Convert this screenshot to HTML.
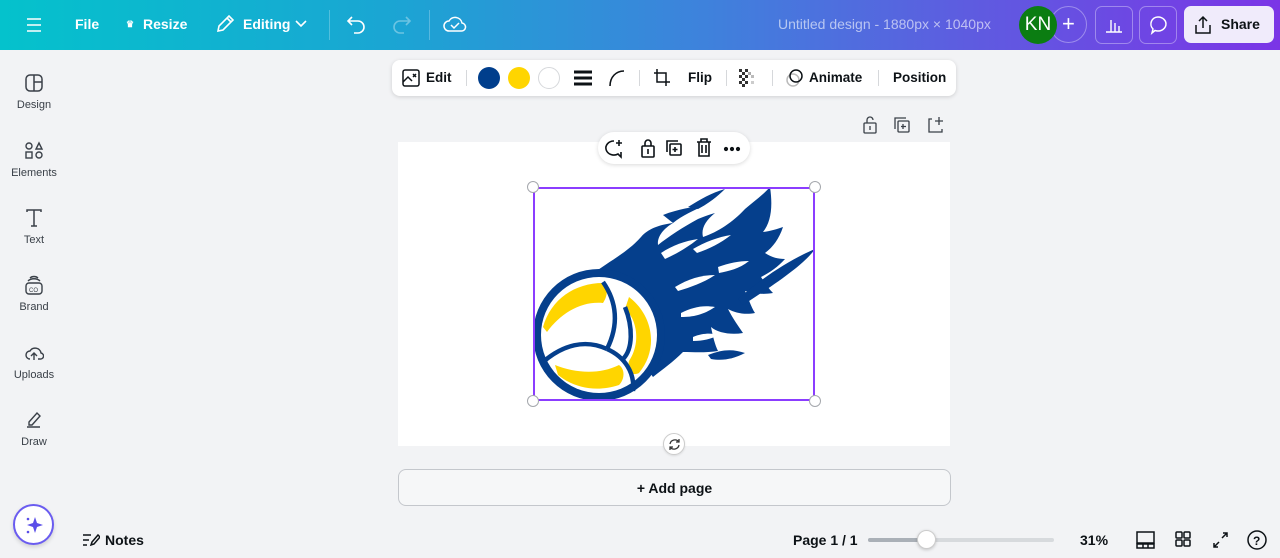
<!DOCTYPE html>
<html><head><meta charset="utf-8"><style>
*{box-sizing:border-box;margin:0;padding:0}
body{width:1280px;height:558px;overflow:hidden;background:#f2f3f5;font-family:"Liberation Sans",sans-serif;position:relative;color:#0d1216}
.hdr{position:absolute;left:0;top:0;width:1280px;height:50px;background:linear-gradient(90deg,#04c2cc 0%,#1aa6d3 30%,#3e82dc 55%,#5d5de0 75%,#7b35e6 100%);color:#fff}
.hdr .t{position:absolute;top:16px;font-size:14px;font-weight:bold}
.sep{position:absolute;top:10px;width:1px;height:30px;background:rgba(255,255,255,.25)}
.side{position:absolute;left:0;top:51px;width:68px;height:507px}
.si{position:absolute;left:0;width:68px;text-align:center;font-size:11px;color:#3a4048}
.si svg{display:block;margin:0 auto 6px}
.tb{position:absolute;left:392px;top:60px;width:564px;height:36px;background:#fff;border-radius:8px;box-shadow:0 1px 4px rgba(0,0,0,.15);font-size:13.5px;font-weight:bold}
.tb .x{position:absolute;top:10px}
.vs{position:absolute;top:10px;width:1px;height:16px;background:#d6d8db}
.dot{position:absolute;top:7px;width:22px;height:22px;border-radius:50%}
.page{position:absolute;left:398px;top:142px;width:552px;height:304px;background:#fff}
.fl{position:absolute;left:598px;top:132px;width:152px;height:32px;background:#fff;border-radius:16px;box-shadow:0 1px 4px rgba(0,0,0,.15)}
.h{position:absolute;width:12px;height:12px;border-radius:50%;background:#fff;border:1px solid #a5a8ad}
</style></head><body>
<div class="hdr">
 <svg style="position:absolute;left:26px;top:17px" width="16" height="16"><path d="M1 2h14M1 8h14M1 14h14" stroke="#fff" stroke-width="1.6"/></svg>
 <div class="t" style="left:75px">File</div>
 <div class="t" style="left:126px;font-size:9px;top:19px">♛</div>
 <div class="t" style="left:143px">Resize</div>
 <svg style="position:absolute;left:215px;top:14px" width="20" height="20"><path d="M3 17l1-5L14 2l4 4L8 16z M12 4l4 4" fill="none" stroke="#fff" stroke-width="1.6"/></svg>
 <div class="t" style="left:243px">Editing</div>
 <svg style="position:absolute;left:295px;top:19px" width="12" height="10"><path d="M1 2l5 5 5-5" fill="none" stroke="#fff" stroke-width="1.6"/></svg>
 <div class="sep" style="left:329px"></div>
 <svg style="position:absolute;left:346px;top:14px" width="22" height="20"><path d="M6 3L2 7l4 4M2 7h10a6 6 0 0 1 0 12H8" fill="none" stroke="#fff" stroke-width="1.6"/></svg>
 <svg style="position:absolute;left:390px;top:14px" width="22" height="20" opacity=".35"><path d="M16 3l4 4-4 4M20 7H10a6 6 0 0 0 0 12h4" fill="none" stroke="#fff" stroke-width="1.6"/></svg>
 <div class="sep" style="left:429px"></div>
 <svg style="position:absolute;left:443px;top:13px" width="24" height="22"><path d="M6 18a5 5 0 0 1 0-10 7 7 0 0 1 13 2 4 4 0 0 1-1 8z M8 12l3 3 5-5" fill="none" stroke="#fff" stroke-width="1.5"/></svg>
 <div class="t" style="left:778px;font-weight:normal;color:rgba(255,255,255,.6)">Untitled design - 1880px × 1040px</div>
 <div style="position:absolute;left:1050px;top:6px;width:37px;height:37px;border-radius:50%;border:1px solid rgba(255,255,255,.35)"></div>
 <div style="position:absolute;left:1062px;top:11px;font-size:22px;">+</div>
 <div style="position:absolute;left:1019px;top:6px;width:38px;height:38px;border-radius:50%;background:#0b7d12;font-size:19px;text-align:center;line-height:38px">KN</div>
 <div style="position:absolute;left:1095px;top:6px;width:38px;height:38px;border-radius:7px;border:1px solid rgba(255,255,255,.35)"></div>
 <svg style="position:absolute;left:1104px;top:15px" width="20" height="20"><path d="M2 17h16M7 5v12M11 8v9M15 11v6" stroke="#fff" stroke-width="1.4"/></svg>
 <div style="position:absolute;left:1139px;top:6px;width:38px;height:38px;border-radius:7px;border:1px solid rgba(255,255,255,.35)"></div>
 <svg style="position:absolute;left:1147px;top:14px" width="22" height="22"><path d="M11 3a8 7 0 1 1-3 13.5L5 19l1-4A7 7 0 0 1 11 3z" fill="none" stroke="#fff" stroke-width="1.5"/></svg>
 <div style="position:absolute;left:1184px;top:6px;width:90px;height:37px;border-radius:7px;background:#f0ebfb;color:#0d1216"><svg style="position:absolute;left:9px;top:9px" width="20" height="20"><path d="M10 13V2M6 6l4-4 4 4M3 10v8h14v-8" fill="none" stroke="#0d1216" stroke-width="1.5"/></svg><span style="position:absolute;left:37px;top:10px;font-size:14px;font-weight:bold">Share</span></div>
</div>
<div class="side">
 <div class="si" style="top:22px"><svg width="20" height="20"><rect x="2" y="2" width="16" height="16" rx="4" fill="none" stroke="#3a4048" stroke-width="1.5"/><path d="M10 2v16M10 9h8" stroke="#3a4048" stroke-width="1.5"/></svg>Design</div>
 <div class="si" style="top:90px"><svg width="20" height="20" fill="none" stroke="#3a4048" stroke-width="1.4"><circle cx="5" cy="5" r="3"/><path d="M15 2l3 6h-6z"/><rect x="2" y="11" width="6" height="6"/><circle cx="15" cy="14" r="3"/></svg>Elements</div>
 <div class="si" style="top:157px"><svg width="20" height="20"><path d="M3 4V2h14v2M10 2v16M7 18h6" fill="none" stroke="#3a4048" stroke-width="1.5"/></svg>Text</div>
 <div class="si" style="top:224px"><svg width="20" height="20" fill="none" stroke="#3a4048" stroke-width="1.4"><rect x="2" y="8" width="16" height="11" rx="3"/><path d="M4 6c3-3 9-3 12 0M6 3c2-2 6-2 8 0"/><text x="5" y="17" font-size="6" fill="#3a4048" stroke="none" font-family="Liberation Sans">CO</text></svg>Brand</div>
 <div class="si" style="top:292px"><svg width="20" height="20" fill="none" stroke="#3a4048" stroke-width="1.4"><path d="M6 16a4 4 0 0 1 0-8 6 6 0 0 1 11 2 3 3 0 0 1-1 6h-2M10 17V10M7 13l3-3 3 3"/></svg>Uploads</div>
 <div class="si" style="top:359px"><svg width="20" height="20" fill="none" stroke="#3a4048" stroke-width="1.4"><path d="M5 12l8-9 3 3-8 9H5zM3 17h13"/></svg>Draw</div>
 <div style="position:absolute;left:13px;top:453px;width:41px;height:41px;border-radius:50%;background:#fff;border:2px solid #6a5cf0;box-shadow:0 2px 4px rgba(0,0,0,.15)"><svg style="position:absolute;left:9px;top:9px" width="20" height="20"><path d="M11 2l2 6 6 2-6 2-2 6-2-6-6-2 6-2z" fill="#5a4ee8"/><circle cx="4" cy="4" r="1.3" fill="#5a4ee8"/><circle cx="4" cy="17" r="1.3" fill="#5a4ee8"/></svg></div>
</div>
<div class="tb">
 <svg style="position:absolute;left:10px;top:9px" width="18" height="18" fill="none" stroke="#0d1216" stroke-width="1.5"><rect x="1" y="1" width="16" height="16" rx="2"/><path d="M1 13l5-5 4 4M11 5l3 3M14 5l-3 3"/></svg>
 <div class="x" style="left:34px">Edit</div>
 <div class="vs" style="left:74px"></div>
 <div class="dot" style="left:86px;background:#003e8c"></div>
 <div class="dot" style="left:116px;background:#ffd500"></div>
 <div class="dot" style="left:146px;background:#fff;border:1px solid #d6d8db"></div>
 <svg style="position:absolute;left:182px;top:10px" width="18" height="16"><path d="M0 2h18M0 8h18M0 14h18" stroke="#0d1216" stroke-width="3"/></svg>
 <svg style="position:absolute;left:216px;top:9px" width="18" height="18"><path d="M2 17C2 8 8 2 16 2" fill="none" stroke="#0d1216" stroke-width="1.6"/></svg>
 <div class="vs" style="left:247px"></div>
 <svg style="position:absolute;left:261px;top:9px" width="18" height="18" fill="none" stroke="#0d1216" stroke-width="1.5"><path d="M4 0v13h13M1 4h12v13"/></svg>
 <div class="x" style="left:296px">Flip</div>
 <div class="vs" style="left:334px"></div>
 <svg style="position:absolute;left:347px;top:9px" width="18" height="18"><g fill="#333"><rect x="0" y="0" width="3" height="3"/><rect x="6" y="0" width="3" height="3"/><rect x="3" y="3" width="3" height="3"/><rect x="9" y="3" width="3" height="3" fill="#aaa"/><rect x="0" y="6" width="3" height="3"/><rect x="6" y="6" width="3" height="3"/><rect x="3" y="9" width="3" height="3"/><rect x="12" y="6" width="3" height="3" fill="#bbb"/><rect x="0" y="12" width="3" height="3"/><rect x="6" y="12" width="3" height="3"/><rect x="3" y="15" width="3" height="3"/><rect x="12" y="12" width="3" height="3" fill="#ccc"/></g></svg>
 <div class="vs" style="left:380px"></div>
 <svg style="position:absolute;left:393px;top:8px" width="20" height="20" fill="none" stroke-width="1.5"><circle cx="8" cy="12" r="6" stroke="#bbb"/><circle cx="11" cy="8" r="6" stroke="#0d1216"/></svg>
 <div class="x" style="left:417px">Animate</div>
 <div class="vs" style="left:486px"></div>
 <div class="x" style="left:501px">Position</div>
</div>
<svg style="position:absolute;left:862px;top:115px" width="90" height="20" fill="none" stroke="#3a4048" stroke-width="1.3"><rect x="2" y="8" width="12" height="10" rx="1"/><path d="M5 8V5a3 3 0 0 1 6 0M8 11v4"/><rect x="36" y="6" width="11" height="11" rx="1"/><path d="M33 14V3h11M41 9v5M39 11.5h5"/><path d="M70 4h-3v13h13v-3M77 2v8M73 6h8"/></svg>
<div class="page"></div>
<div class="fl"><svg style="position:absolute;left:6px;top:5px" width="142" height="22" fill="none" stroke="#0d1216" stroke-width="1.6"><path d="M10 4a8 7 0 1 0 4 13l3 3v-5M15 3v6M12 6h6"/><rect x="38" y="9" width="12" height="11" rx="1"/><path d="M41 9V6a3 3 0 0 1 6 0v3M44 12v5"/><rect x="66" y="7" width="11" height="11" rx="1"/><path d="M63 15V4h11M71 10v5M68.5 12.5h5"/><path d="M93 5h14M97 5V2h6v3M95 5v14h10V5M98 8v8M102 8v8"/><circle cx="122" cy="12" r="1.3" fill="#0d1216"/><circle cx="128" cy="12" r="1.3" fill="#0d1216"/><circle cx="134" cy="12" r="1.3" fill="#0d1216"/></svg></div>
<!-- artwork -->
<svg style="position:absolute;left:533px;top:187px" width="282" height="214" viewBox="0 0 282 214">
 <g fill="#053f8c">
  <!-- main flame body -->
  <path d="M55 90C75 75 95 65 108 50C115 42 125 38 140 36C130 42 124 50 125 58C135 50 150 40 165 32C170 30 175 28 182 26C172 34 168 42 170 50C185 45 200 35 212 22C220 15 230 8 237 0C240 20 238 35 230 45C238 44 244 42 250 40C246 52 240 60 232 66C238 70 244 72 252 72C245 80 236 86 228 90C232 96 236 102 240 106C228 108 220 106 212 104C215 110 218 120 222 126C212 128 202 126 195 122C200 132 206 140 210 146C198 148 185 146 178 140C180 150 182 158 185 164C172 166 160 165 150 165C140 175 130 182 120 190L90 150Z"/>
  <path d="M130 28C145 22 160 20 172 18C160 24 150 28 140 36Z"/>
  <path d="M155 20C168 12 178 6 192 2C184 10 176 16 165 22Z"/>
  <path d="M205 112C230 90 258 72 282 62C272 76 250 92 210 118Z"/>
  <path d="M175 168C190 162 200 162 212 166C200 172 190 174 178 172Z"/>
  <circle cx="66" cy="148" r="66"/>
 </g>
 <g fill="#fff">
  <path d="M128 66C140 58 152 54 165 52C155 60 145 66 132 72Z"/>
  <path d="M160 62C172 55 185 50 198 48C188 56 176 62 164 66Z"/>
  <path d="M142 100C155 92 168 88 182 88C170 96 158 100 145 104Z"/>
  <path d="M185 80C196 76 206 74 216 74C206 82 196 84 186 86Z"/>
  <path d="M148 126C160 120 170 118 182 120C170 128 160 130 148 130Z"/>
  <path d="M160 150C170 146 178 146 186 148C178 152 170 154 160 154Z"/>
  <circle cx="66" cy="148" r="58"/>
 </g>
 <g fill="#ffd500">
  <path d="M10 140C18 112 42 96 70 96C76 102 74 110 70 116C48 114 28 126 14 145Z"/>
  <path d="M96 110C120 128 126 162 106 186C98 190 94 182 96 174C108 156 104 132 92 122Z"/>
  <path d="M22 178C42 186 66 188 86 178C92 182 92 192 86 198C62 206 40 200 25 188Z"/>
 </g>
 <g fill="none" stroke="#053f8c" stroke-width="4.5">
  <path d="M70 95C84 115 86 138 74 162"/>
  <path d="M74 162C52 152 30 158 10 175"/>
  <path d="M74 162C92 170 102 186 100 204"/>
  <path d="M92 120C100 140 100 162 90 172"/>
 </g>
</svg>
<div style="position:absolute;left:533px;top:187px;width:282px;height:214px;border:2px solid #8b3dff"></div>
<div class="h" style="left:527px;top:181px"></div><div class="h" style="left:809px;top:181px"></div><div class="h" style="left:527px;top:395px"></div><div class="h" style="left:809px;top:395px"></div>
<div style="position:absolute;left:663px;top:433px;width:22px;height:22px;border-radius:50%;background:#fff;border:1px solid #ccc;box-shadow:0 1px 2px rgba(0,0,0,.1)"><svg style="position:absolute;left:4px;top:4px" width="13" height="13" fill="none" stroke="#333" stroke-width="1.3"><path d="M2 6a5 5 0 0 1 9-2M11 7a5 5 0 0 1-9 2M11 1v3H8M2 12V9h3"/></svg></div>
<div style="position:absolute;left:398px;top:469px;width:553px;height:37px;border:1px solid #c4c7cc;border-radius:8px;background:#f6f7f8;text-align:center;line-height:36px;font-size:14px;font-weight:bold">+ Add page</div>
<svg style="position:absolute;left:82px;top:532px" width="18" height="16" fill="none" stroke="#0d1216" stroke-width="1.5"><path d="M1 3h8M1 8h6M1 13h4M9 13l1-3 6-7 2 2-6 7z"/></svg>
<div style="position:absolute;left:105px;top:532px;font-size:14px;font-weight:bold">Notes</div>
<div style="position:absolute;left:793px;top:532px;font-size:14px;font-weight:bold">Page 1 / 1</div>
<div style="position:absolute;left:868px;top:538px;width:186px;height:4px;border-radius:2px;background:#d7dadd"></div>
<div style="position:absolute;left:868px;top:538px;width:58px;height:4px;border-radius:2px;background:#aab0b7"></div>
<div style="position:absolute;left:917px;top:530px;width:19px;height:19px;border-radius:50%;background:#fff;border:1px solid #ccc;box-shadow:0 1px 3px rgba(0,0,0,.2)"></div>
<div style="position:absolute;left:1080px;top:532px;font-size:14px;font-weight:bold">31%</div>
<svg style="position:absolute;left:1136px;top:530px" width="140" height="20" fill="none" stroke="#0d1216" stroke-width="1.5"><rect x="1" y="2" width="17" height="11"/><path d="M1 14h17v4H1zM7 14v4M12 14v4"/><rect x="40" y="2" width="6" height="6" rx="1"/><rect x="48" y="2" width="6" height="6" rx="1"/><rect x="40" y="10" width="6" height="6" rx="1"/><rect x="48" y="10" width="6" height="6" rx="1"/><path d="M78 17l5-5M78 13v4h4M91 3l-5 5M87 3h4v4"/><circle cx="121" cy="10" r="9"/><text x="117" y="15" font-size="12" font-family="Liberation Sans" font-weight="bold" fill="#0d1216" stroke="none">?</text></svg>
</body></html>
